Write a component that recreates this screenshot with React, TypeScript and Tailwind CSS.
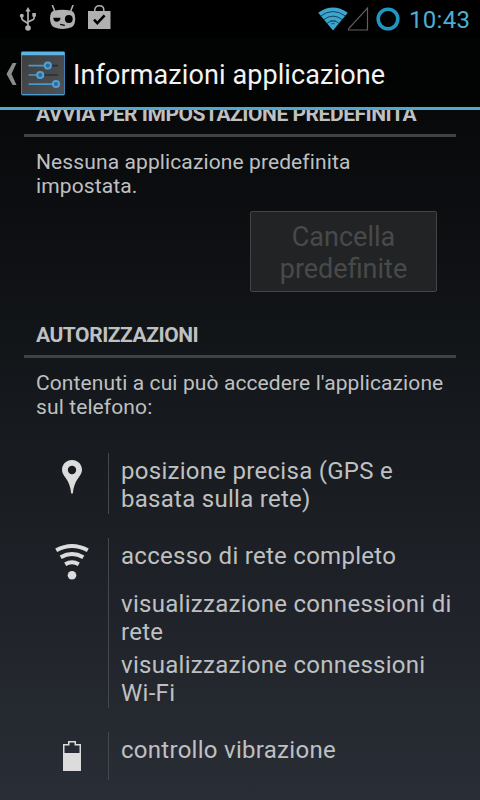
import type { ReactNode } from 'react'

const PERMISSION_GROUPS = [
  {
    id: 'location',
    icon: <LocationIcon />,
    items: [['posizione precisa (GPS e', 'basata sulla rete)']],
  },
  {
    id: 'network',
    icon: <NetworkIcon />,
    items: [
      ['accesso di rete completo'],
      ['visualizzazione connessioni di', 'rete'],
      ['visualizzazione connessioni', 'Wi-Fi'],
    ],
  },
  {
    id: 'battery',
    icon: <BatteryIcon />,
    items: [['controllo vibrazione']],
  },
]

function LocationIcon() {
  return (
    <svg className="h-12 w-12" viewBox="0 0 48 48" fill="#dcdcdc">
      <path
        fillRule="evenodd"
        d="M24 7c-5.600 0-10 4.300-10 9.700 0 3.300 1.700 5.600 3.700 8.300 3.200 4.200 4.900 9 5.500 15.500h1.600c.6-6.500 2.300-11.300 5.500-15.500 2-2.700 3.700-5 3.700-8.300C34 11.300 29.600 7 24 7Zm0 5.800a4.200 4.200 0 1 1 0 8.400 4.200 4.200 0 0 1 0-8.400Z"
      />
    </svg>
  )
}

function NetworkIcon() {
  return (
    <svg className="h-12 w-12" viewBox="0 0 48 48" fill="none" stroke="#dcdcdc" strokeWidth="4">
      <path d="M8.200 12.300Q24 3.700 39.800 12.300" />
      <path d="M12.700 19.200Q24 13 35.300 19.200" />
      <path d="M17.200 26.200Q24 22.400 30.800 26.200" />
      <circle cx="24" cy="37.300" r="4.300" fill="#dcdcdc" stroke="none" />
    </svg>
  )
}

function BatteryIcon() {
  return (
    <svg className="h-12 w-12" viewBox="0 0 48 48" fill="#dcdcdc">
      <path fillRule="evenodd" d="M20 9h8v3h5v27H15V12h5V9Zm1.500 1.500v3h-5V21h15v-7.500h-5v-3h-5Z" />
    </svg>
  )
}

function UsbIcon() {
  return (
    <svg className="h-[26px] w-[18px]" viewBox="0 0 18 26" fill="#b0b0b0">
      <path d="M9 2l2.600 4.500H6.400z" />
      <circle cx="9" cy="23" r="2.800" />
      <circle cx="2.800" cy="10.800" r="2" />
      <path d="M13.300 8h3.600v3.600h-3.600z" />
      <path d="M9 5v17M2.800 11v2.300q0 1.200 1.200 1.900l5 3.300M15.100 10.500v2.300q0 1-1 1.600L9 17" fill="none" stroke="#b0b0b0" strokeWidth="1.700" />
    </svg>
  )
}

function CidIcon() {
  return (
    <svg className="h-[26px] w-[27px]" viewBox="0 0 27 26">
      <path d="M3.300 0L5.700 6M24.100 0l-2.400 6" stroke="#b0b0b0" strokeWidth="1.600" />
      <path d="M5 5.700Q13.500 4 22 5.700q4 .8 4.200 7.500.2 7-3.700 9Q18 24 13.500 24T5 22.200q-4-2-4-9Q1 6.500 5 5.700Z" fill="#b0b0b0" />
      <path d="M4.300 12.800h7.200q-.2 3.700-3.400 3.900-3.600.2-3.800-3.900Z" fill="#000" />
      <circle cx="19.800" cy="14" r="3.900" fill="#000" />
      <path d="M11.200 19.400l4.600 1" stroke="#000" strokeWidth="1.100" />
    </svg>
  )
}

function BagIcon() {
  return (
    <svg className="h-[26px] w-[23px]" viewBox="0 0 23 26" fill="none">
      <path d="M6.800 7V5C6.800 2.500 8.500.8 11.300.8S15.800 2.500 15.800 5v2" stroke="#b0b0b0" strokeWidth="1.500" />
      <path d="M0 6h22.500v18H0z" fill="#b0b0b0" />
      <path d="M6 14.600l3.300 3.600 7.300-7.900" stroke="#000" strokeWidth="2.600" />
    </svg>
  )
}

function WifiStatusIcon() {
  return (
    <svg className="h-[24px] w-[30px]" viewBox="0 0 30 24" fill="none">
      <path d="M.2 5.700Q15-4.600 29.800 5.700L15 23.500Z" fill="#3da5cf" />
      <path d="M2.400 9.200Q15-.2 27.600 9.200M5.500 12.900Q15 5.300 24.500 12.900M8.700 16.500Q15 11.300 21.300 16.500" stroke="#082b3b" strokeWidth=".8" />
      <path d="M12.400 13.800h5.200M13.300 16.700h3.400" stroke="#15546f" strokeWidth="1" />
    </svg>
  )
}

function SettingsIcon() {
  return (
    <svg className="h-[46px] w-[46px]" viewBox="0 0 46 46">
      <defs>
        <linearGradient id="tile" x1="0" y1="0" x2="1" y2="1">
          <stop offset="0" stopColor="#3b3d3f" />
          <stop offset="1" stopColor="#515253" />
        </linearGradient>
      </defs>
      <rect x="1.500" y="1" width="43" height="43" rx="1" fill="url(#tile)" stroke="#3c80b4" strokeWidth="1" />
      <path d="M1.500 2.500h43" stroke="#58b5e5" strokeWidth="3.400" />
      <path d="M2 43.500h42" stroke="#4b9bd0" strokeWidth="1.200" />
      <g strokeWidth="1.700">
        <path d="M8.500 14.700h19M8.500 24h11M8.500 33.200h27" stroke="#4b97cb" />
        <path d="M27.500 14.700H38M20 24h18" stroke="#1f3140" />
      </g>
      <g fill="#2b6b9b" stroke="#529fd2" strokeWidth="2">
        <circle cx="27.800" cy="14.600" r="3.100" />
        <circle cx="20.200" cy="24" r="3.100" />
        <circle cx="36" cy="33" r="3.100" />
      </g>
    </svg>
  )
}

function StatusBar() {
  return (
    <div className="flex h-[38px] shrink-0 items-start bg-black">
      <div className="flex gap-[12px] pl-[19px] pt-[5px]">
        <UsbIcon />
        <CidIcon />
        <BagIcon />
      </div>
      <div className="ml-auto flex pr-[10px]">
        <div className="pt-[7px]"><WifiStatusIcon /></div>
        <svg className="mt-[6px] h-[25px] w-[22px]" viewBox="0 0 22 25" fill="none" stroke="#606060" strokeWidth="1.200">
          <path d="M19.500 2v22H-.5z" />
        </svg>
        <svg className="ml-[6px] mt-[7px] h-6 w-6" viewBox="0 0 24 24" fill="none" stroke="#2097c2" strokeWidth="3.600">
          <circle cx="12" cy="12" r="9.800" />
        </svg>
        <span className="ml-[9px] w-[61px] whitespace-nowrap pt-[6px] text-[24px] leading-[28px] tracking-[0.3px] text-[#4caed5]">10:43</span>
      </div>
    </div>
  )
}

function ActionBar() {
  return (
    <header className="flex h-[72px] shrink-0 items-center border-b-[3px] border-[#4faad0] bg-[#020303]">
      <svg className="ml-[6px] mt-[2px] h-[22px] w-[11px]" viewBox="0 0 11 22" fill="#8b8b8b">
        <path d="M6.600 0H10.500L5.500 11l5 11H6.600L.5 11z" />
      </svg>
      <div className="ml-[3px] mt-[2px]"><SettingsIcon /></div>
      <h1 className="ml-[7px] mt-[5px] whitespace-nowrap text-[27px] leading-8 tracking-[0.1px] text-[#f3f3f3]">Informazioni applicazione</h1>
    </header>
  )
}

function SectionTitle({ children }: { children: ReactNode }) {
  return (
    <h2 className="h-[36px] whitespace-nowrap border-b-[3px] border-[#404346] pl-3 pt-px text-[21px] font-bold leading-6 tracking-[-0.46px]">
      {children}
    </h2>
  )
}

export default function App() {
  return (
    <div className="flex h-[800px] w-[480px] flex-col overflow-hidden bg-linear-to-b/srgb from-[#020304] via-[#15181c] to-[#292d35] font-[Roboto,sans-serif] text-[#bfc0c1]">
      <StatusBar />
      <ActionBar />
      <main className="flex min-h-0 flex-1 flex-col overflow-hidden px-6">
        {/* list is scrolled, so the first heading is cut by the action bar */}
        <div className="-mt-[9px] shrink-0">
          <SectionTitle>AVVIA PER IMPOSTAZIONE PREDEFINITA</SectionTitle>
          <p className="whitespace-nowrap pl-3 pt-[13px] text-[21px] leading-6 tracking-[0.11px]">
            Nessuna applicazione predefinita<br />impostata.
          </p>
          <div className="flex justify-end pr-[19px] pt-[13px]">
            <button
              type="button"
              disabled
              className="h-[81px] w-[187px] rounded-[2px] border border-[#434446] bg-[#222325] pt-[2px] text-[27px] leading-8 text-[#484a4a]"
            >
              Cancella<br />predefinite
            </button>
          </div>
        </div>

        <div className="mt-[30px] shrink-0">
          <SectionTitle>AUTORIZZAZIONI</SectionTitle>
          <p className="whitespace-nowrap pl-3 pt-[13px] text-[21px] leading-6 tracking-[0.11px]">
            Contenuti a cui può accedere l'applicazione<br />sul telefono:
          </p>
          <div className="flex flex-col gap-6 pt-[34px]">
            {PERMISSION_GROUPS.map(group => (
              <div key={group.id} className="flex">
                <div className="w-[84px] pl-6">{group.icon}</div>
                <div className="border-l border-[#44474b] pl-3">
                  {group.items.map(lines => (
                    <p
                      key={lines[0]}
                      className={`whitespace-nowrap pt-1 text-[24px] leading-7 tracking-[0.28px] ${lines.length > 1 ? 'h-[61px]' : 'h-12'}`}
                    >
                      {lines.map(line => <span key={line} className="block">{line}</span>)}
                    </p>
                  ))}
                </div>
              </div>
            ))}
          </div>
        </div>
      </main>
    </div>
  )
}
